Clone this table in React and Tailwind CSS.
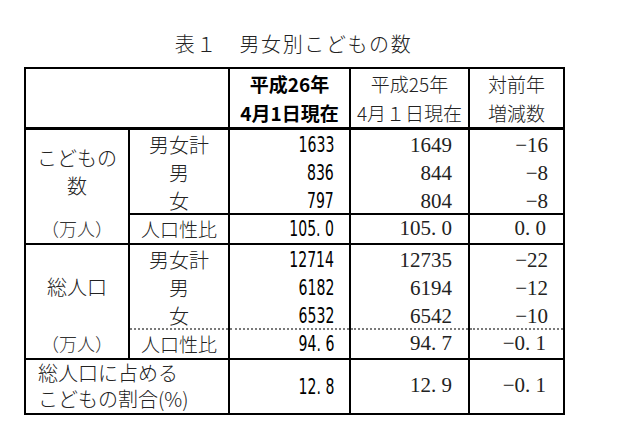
import React from 'react';

const sans = "font-['Noto_Sans_CJK_JP',sans-serif]";
const serif = "font-['Liberation_Serif','Noto_Sans_CJK_JP',serif]";
const mincho = "font-['Noto_Sans_CJK_JP',sans-serif] font-light";
const gnum = "font-['DejaVu_Sans_Condensed','Noto_Sans_CJK_JP',sans-serif]";

// narrow gothic digits (MS Gothic style)
function G({ children }) {
    return <span className="inline-block scale-x-[0.71] origin-right whitespace-nowrap leading-[20px]">{children}</span>;
}

function Group({ label, rows, ratio, dashed }) {
    const sep = dashed
        ? 'border-b-2 [border-bottom-style:dotted] border-b-[#7a7a7a]'
        : 'border-b-2 border-b-black';
    return (
        <>
            {rows.map((r, i) => (
                <tr key={r[0]} className={i === 1 ? 'h-[29px]' : 'h-[28px]'}>
                    {i === 0 && (
                        <td rowSpan={3} className={`border-l-2 border-r-2 border-black text-center align-middle text-[20px] leading-[28px] text-[#222] ${mincho}`}>
                            {label}
                        </td>
                    )}
                    <td className={`border-r-2 border-black text-center text-[20px] leading-none pt-1 text-[#222] ${mincho} ${i === 2 ? sep : ''}`}>{r[0]}</td>
                    <td className={`border-r-2 border-black text-right pr-[15px] text-[22px] leading-[20px] pt-1 text-black ${gnum} ${i === 2 ? sep : ''}`}><G>{r[1]}</G></td>
                    <td className={`border-r-2 border-black text-right pr-[16px] text-[21px] leading-none pt-1 text-[#222] ${serif} ${i === 2 ? sep : ''}`}>{r[2]}</td>
                    <td className={`border-r-2 border-black text-right pr-[15px] text-[21px] leading-none pt-1 text-[#222] ${serif} ${i === 2 ? sep : ''}`}>{r[3]}</td>
                </tr>
            ))}
            <tr className="h-[30px] border-b-2 border-black">
                <td className={`border-l-2 border-r-2 border-black text-center text-[18px] leading-none text-[#333] ${mincho}`}>（万人）</td>
                <td className={`border-r-2 border-black text-center text-[19px] leading-none text-[#222] ${mincho}`}>人口性比</td>
                <td className={`border-r-2 border-black text-right pr-[15px] text-[22px] leading-[20px] text-black ${gnum}`}><G>{ratio[0]}</G></td>
                <td className={`border-r-2 border-black text-right pr-[16px] text-[21px] leading-none text-[#222] ${serif}`}>{ratio[1]}</td>
                <td className={`border-r-2 border-black text-right pr-[17px] text-[21px] leading-none text-[#222] ${serif}`}>{ratio[2]}</td>
            </tr>
        </>
    );
}

export default function App() {
    return (
        <div className="w-[640px] h-[426px] bg-white pl-[24px] pt-[30px]">
            {/* title */}
            <div className={`w-[539px] text-center text-[20px] leading-[28px] tracking-[1.6px] text-[#222] ${mincho}`}>
                表１　男女別こどもの数
            </div>
            <table className="mt-[9px] w-[539px] border-collapse table-fixed">
                <colgroup>
                    <col className="w-[104px]" />
                    <col className="w-[100px]" />
                    <col className="w-[121px]" />
                    <col className="w-[119px]" />
                    <col className="w-[95px]" />
                </colgroup>
                <tbody>
                    {/* header */}
                    <tr className="h-[60px] border-t-2 border-b-[3px] border-black">
                        <td colSpan={2} className="border-l-2 border-r-2 border-black"></td>
                        <td className={`border-r-2 border-black text-center text-[19px] leading-[29px] font-bold text-black whitespace-nowrap px-0 ${sans}`}>
                            平成26年<br />4月1日現在
                        </td>
                        <td className={`border-r-2 border-black text-center text-[19px] leading-[29px] text-[#222] whitespace-nowrap px-0 ${mincho}`}>
                            平成25年<br />4月１日現在
                        </td>
                        <td className={`border-r-2 border-black text-center text-[19px] leading-[29px] text-[#222] ${mincho}`}>
                            対前年<br />増減数
                        </td>
                    </tr>
                    <Group
                        label={<>こどもの<br />数</>}
                        rows={[
                            ['男女計', '1633', '1649', '−16'],
                            ['男', '836', '844', '−8'],
                            ['女', '797', '804', '−8'],
                        ]}
                        ratio={['105. 0', '105. 0', '0. 0']}
                    />
                    <Group
                        label="総人口"
                        dashed
                        rows={[
                            ['男女計', '12714', '12735', '−22'],
                            ['男', '6182', '6194', '−12'],
                            ['女', '6532', '6542', '−10'],
                        ]}
                        ratio={['94. 6', '94. 7', '−0. 1']}
                    />
                    <tr className="h-[55px] border-b-2 border-black">
                        <td colSpan={2} className={`border-l-2 border-r-2 border-black pl-[12px] text-left text-[20px] leading-[26px] text-[#222] ${mincho}`}>
                            総人口に占める<br />こどもの割合(%)
                        </td>
                        <td className={`border-r-2 border-black text-right pr-[15px] text-[22px] text-black ${gnum}`}><G>12. 8</G></td>
                        <td className={`border-r-2 border-black text-right pr-[16px] text-[21px] text-[#222] ${serif}`}>12. 9</td>
                        <td className={`border-r-2 border-black text-right pr-[17px] text-[21px] text-[#222] ${serif}`}>−0. 1</td>
                    </tr>
                </tbody>
            </table>
        </div>
    );
}
